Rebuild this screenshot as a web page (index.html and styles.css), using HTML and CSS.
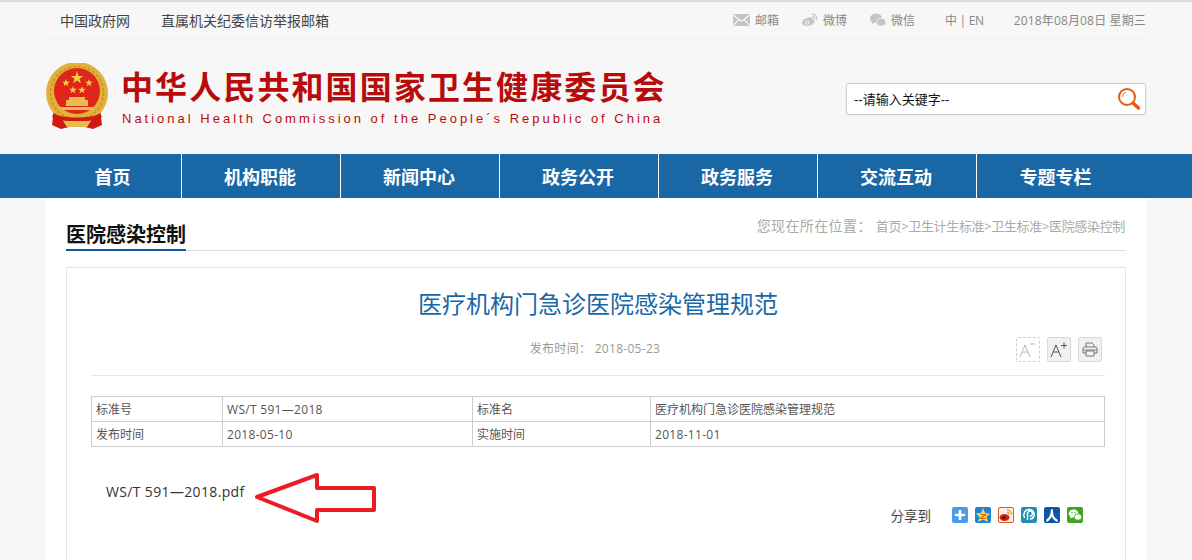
FILE: index.html
```html
<!DOCTYPE html>
<html lang="zh-CN">
<head>
    <meta charset="UTF-8">
    <meta name="viewport" content="width=device-width, initial-scale=1.0">
    <title>医疗机构门急诊医院感染管理规范</title>
    <link rel="stylesheet" href="styles.css">
</head>
<body>

    <!-- Top bar -->
    <div class="topbar">
        <div class="topbar-inner">
            <div class="top-links">
                <a href="#">中国政府网</a>
                <a href="#">直属机关纪委信访举报邮箱</a>
            </div>
            <div class="top-tools">
                <a href="#" class="tool tool-mail">
                    <svg width="17" height="12" viewBox="0 0 17 12"><path fill="#c4c4c4" d="M0 0h17L8.500 6.500zM0 1.500v9.500l5-5.500zM17 1.500v9.500l-5-5.500zM0.500 12l5.500-5.800 2.500 1.900 2.500-1.900 5.500 5.800z"/></svg>
                    邮箱
                </a>
                <a href="#" class="tool tool-weibo">
                    <svg width="16" height="14" viewBox="0 0 17 14"><path fill="#c4c4c4" d="M7 4.500c3.500-1 4.800.2 4.200 2 2.300.5 2.500 2 1.500 3.500-1.300 2.200-4.500 3.500-7.500 3.500C2.500 13.500 0 12.300 0 10c0-2 2.800-5 7-5.500z"/><circle cx="5.600" cy="9.800" r="2.300" fill="#f7f7f7"/><circle cx="5.600" cy="9.900" r="1.200" fill="#c4c4c4"/><path fill="none" stroke="#c4c4c4" stroke-width="1.400" d="M10.500 1.200c3-.7 6 2 5 5.500M11 3.500c1.500-.3 2.800 1 2.300 2.500"/></svg>
                    微博
                </a>
                <a href="#" class="tool tool-wechat">
                    <svg width="16" height="14" viewBox="0 0 17 14"><ellipse cx="6.500" cy="5.300" rx="6.500" ry="5.200" fill="#c4c4c4"/><path fill="#c4c4c4" d="M2.500 8.500l-.5 3 3-1.800z"/><ellipse cx="11.800" cy="9.300" rx="5.200" ry="4.300" fill="#c4c4c4" stroke="#f7f7f7" stroke-width="1"/></svg>
                    微信
                </a>
                <span class="lang">中 | EN</span>
                <span class="today">2018年08月08日 星期三</span>
            </div>
        </div>
    </div>

    <!-- Header with logo and search -->
    <div class="header">
        <div class="header-inner">
            <div class="logo">
                <svg class="emblem" width="64" height="70" viewBox="0 0 64 70">
                    <defs>
                        <polygon id="star" points="0,-5 1.200,-1.600 4.800,-1.600 1.900,.6 3,4 0,2 -3,4 -1.900,.6 -4.800,-1.600 -1.200,-1.600"/>
                    </defs>
                    <path fill="#d11a12" d="M9 46L7 62l9 4 12-3h8l12 3 9-4-2-16z"/>
                    <circle cx="32" cy="30" r="31" fill="#e2b13c"/>
                    <circle cx="32" cy="30" r="26.500" fill="none" stroke="#c98f1f" stroke-width="1.500" stroke-dasharray="3 2"/>
                    <circle cx="32" cy="28" r="23" fill="#e0261a"/>
                    <g fill="#f6d23f">
                        <use href="#star" transform="translate(32 15) scale(1.300)"/>
                        <use href="#star" transform="translate(21 20) scale(.8)"/>
                        <use href="#star" transform="translate(44 20) scale(.8)"/>
                        <use href="#star" transform="translate(28 27) scale(.8)"/>
                        <use href="#star" transform="translate(37 27) scale(.8)"/>
                    </g>
                    <path fill="#e9bb4c" d="M24 34h16v3h3v6H21v-6h3zM13 44h38l-3 3H16z"/>
                    <path fill="#d11a12" d="M9 50c6 6 40 6 46 0l2 4c-8 6-42 6-50 0z"/>
                    <path fill="#e9bb4c" d="M18 58h28l-4 6H22z"/>
                </svg>
                <div class="logo-text">
                    <div class="logo-cn">中华人民共和国国家卫生健康委员会</div>
                    <div class="logo-en">National Health Commission of the People´s Republic of China</div>
                </div>
            </div>
            <div class="search-box">
                <input type="text" class="search-input" value="--请输入关键字--">
                <svg width="24" height="24" viewBox="0 0 24 24"><circle cx="10" cy="10" r="8" fill="none" stroke="#e8590f" stroke-width="2"/><path fill="none" stroke="#f2a27a" stroke-width="1.500" d="M5.500 10c0-2 1.500-4 3.500-4.500"/><path stroke="#e8590f" stroke-width="3.500" stroke-linecap="round" d="M16.500 16.500l5 4.500"/></svg>
            </div>
        </div>
    </div>

    <!-- Main nav -->
    <div class="nav">
        <div class="nav-inner">
            <a href="#" class="nav-item nav-first">首页</a>
            <a href="#" class="nav-item">机构职能</a>
            <a href="#" class="nav-item">新闻中心</a>
            <a href="#" class="nav-item">政务公开</a>
            <a href="#" class="nav-item">政务服务</a>
            <a href="#" class="nav-item">交流互动</a>
            <a href="#" class="nav-item">专题专栏</a>
        </div>
    </div>

    <!-- Content -->
    <div class="main">
        <div class="section-head">
            <h2>医院感染控制</h2>
            <div class="crumbs">
                <span class="crumbs-label">您现在所在位置：</span>
                <span class="crumbs-path">首页&gt;卫生计生标准&gt;卫生标准&gt;医院感染控制</span>
            </div>
        </div>

        <div class="card">
            <h1>医疗机构门急诊医院感染管理规范</h1>
            <div class="meta">
                <span class="pub-date">发布时间： 2018-05-23</span>
                <div class="meta-btns">
                    <a href="#" class="btn btn-off">
                        <svg width="18" height="16" viewBox="0 0 18 16"><path fill="none" stroke="#bbb" d="M1 15L6 3l5 12M3 10h6M11 2h5"/></svg>
                    </a>
                    <a href="#" class="btn">
                        <svg width="18" height="16" viewBox="0 0 18 16"><path fill="none" stroke="#555" d="M1 15L6 3l5 12M3 10h6M11 3.500h6M14 .5v6"/></svg>
                    </a>
                    <a href="#" class="btn">
                        <svg width="16" height="15" viewBox="0 0 16 15"><path fill="none" stroke="#777" d="M4 5V1h6l2 2v2M2.500 5h11c1 0 1.500.5 1.500 1.500V11h-3M4 11H1V6.500C1 5.500 1.500 5 2.500 5M4 9h8v5H4zM1 8h14"/></svg>
                    </a>
                </div>
            </div>

            <table class="info">
                <tr>
                    <td class="c1">标准号</td>
                    <td class="c2 num">WS/T 591—2018</td>
                    <td class="c3">标准名</td>
                    <td>医疗机构门急诊医院感染管理规范</td>
                </tr>
                <tr>
                    <td>发布时间</td>
                    <td class="num">2018-05-10</td>
                    <td>实施时间</td>
                    <td class="num">2018-11-01</td>
                </tr>
            </table>

            <div class="attach">
                <a href="#" class="file">WS/T 591—2018.pdf</a>
                <!-- red arrow drawn over the page -->
                <svg class="arrow" width="126" height="52" viewBox="0 0 126 52"><polygon fill="#fff" stroke="#ed1c24" stroke-width="4" stroke-linejoin="round" points="3,25 63,3 63,16 120,16 120,38 63,38 63,49"/></svg>
            </div>

            <div class="share">
                <span class="share-label">分享到</span>
                <a href="#" class="share-icon">
                    <svg width="16" height="16" viewBox="0 0 16 16"><rect width="16" height="16" rx="2" fill="#4d9ae8"/><path stroke="#fff" stroke-width="2.500" d="M8 3v10M3 8h10"/></svg>
                </a>
                <a href="#" class="share-icon">
                    <svg width="16" height="16" viewBox="0 0 16 16"><rect width="16" height="16" rx="2" fill="#1a84d8"/><polygon fill="#ffd53c" points="8,1 10,6 15,6.500 11.500,10 13,15 8,12.500 3,15 4.500,10 1,6.500 6,6"/><path fill="none" stroke="#d8661a" stroke-width="1.200" d="M5.500 7.500h5l-5 4h5"/></svg>
                </a>
                <a href="#" class="share-icon">
                    <svg width="16" height="16" viewBox="0 0 16 16"><rect x=".5" y=".5" width="15" height="15" rx="1.500" fill="#fff1e4" stroke="#e2561e"/><ellipse cx="6.500" cy="10.500" rx="5" ry="3.500" fill="#d8231c"/><circle cx="6" cy="10.800" r="1.800" fill="#222"/><path fill="none" stroke="#f09a20" stroke-width="1.500" d="M9 3c2.500 0 4.500 2 4.500 4.500M9 5.500c1 0 2 1 2 2"/></svg>
                </a>
                <a href="#" class="share-icon">
                    <svg width="16" height="16" viewBox="0 0 16 16"><rect width="16" height="16" rx="2" fill="#1f8fb8"/><path fill="none" stroke="#fff" stroke-width="1.500" d="M6.500 13V6.500a2.500 2.500 0 1 1 2 2.500M3.500 11C1.500 7 4 2.500 8 2.500s6 3.500 5 6.500-3 3-4 3"/></svg>
                </a>
                <a href="#" class="share-icon">
                    <svg width="16" height="16" viewBox="0 0 16 16"><rect width="16" height="16" rx="2" fill="#0f56a8"/><path fill="none" stroke="#fff" stroke-width="2.200" d="M8 2.500c0 5-1.500 9-5.500 11.500M8 5c0 4 1.500 7 5.500 9"/></svg>
                </a>
                <a href="#" class="share-icon">
                    <svg width="16" height="16" viewBox="0 0 16 16"><rect width="16" height="16" rx="2" fill="#3fa51e"/><ellipse cx="6.500" cy="6.500" rx="4.800" ry="4" fill="#fff"/><path fill="#fff" d="M3.500 9l-.5 2.500L6 10z"/><ellipse cx="11" cy="10" rx="3.800" ry="3.200" fill="#fff" stroke="#3fa51e" stroke-width=".8"/><circle cx="5" cy="5.500" r=".7" fill="#3fa51e"/><circle cx="8" cy="5.500" r=".7" fill="#3fa51e"/></svg>
                </a>
            </div>
        </div>
    </div>

</body>
</html>
```

FILE: styles.css
```css
/* Page */
html,
body {
    height: 560px;
    overflow: hidden;
}

body {
    margin: 0;
    background-color: #f7f7f7;
    font-family: "Open Sans", "Noto Sans CJK SC", sans-serif;
    color: #333;
}

a {
    color: inherit;
    text-decoration: none;
}

/* Top bar */
.topbar {
    height: 37px;
    border-top: 2px solid #dcdcdc;
}

.topbar-inner {
    width: 1100px;
    height: 36px;
    margin: 0 auto;
    display: flex;
    justify-content: space-between;
    align-items: center;
    border-bottom: 1px solid #f0f0f0;
}

.top-links {
    display: flex;
    gap: 31px;
    padding-left: 14px;
    font-size: 14px;
    color: #444;
}

.top-tools {
    display: flex;
    align-items: center;
    font-size: 12px;
    color: #888;
}

.tool {
    display: flex;
    align-items: center;
    gap: 5px;
    margin-right: 23px;
}

.lang {
    margin-left: 7px;
    margin-right: 30px;
    letter-spacing: -0.3px;
}

.today {
    letter-spacing: 0.150px;
}

/* Header */
.header {
    height: 115px;
}

.header-inner {
    width: 1100px;
    height: 100%;
    margin: 0 auto;
    display: flex;
    justify-content: space-between;
    align-items: center;
}

.logo {
    display: flex;
    align-items: center;
    gap: 12px;
    margin-top: 2px;
}

.emblem {
    margin-left: -1px;
}

.logo-cn {
    font-size: 32px;
    font-weight: 700;
    line-height: 36px;
    letter-spacing: 2.100px;
    white-space: nowrap;
    color: #b80c0c;
}

.logo-en {
    margin-top: 6px;
    margin-left: 1px;
    font-family: "Liberation Sans", sans-serif;
    font-size: 13px;
    line-height: 16px;
    letter-spacing: 3px;
    white-space: nowrap;
    color: #b80c0c;
}

/* Search */
.search-box {
    width: 298px;
    height: 30px;
    margin-top: 4px;
    display: flex;
    align-items: center;
    background-color: white;
    border: 1px solid #ccc;
    border-radius: 3px;
    box-shadow: 0 0 2px rgba(0, 0, 0, 0.08);
}

.search-input {
    flex: 1;
    min-width: 0;
    height: 100%;
    padding: 0 0 0 7px;
    border: none;
    outline: none;
    background: none;
    font-family: "Liberation Sans", "Noto Sans CJK SC", sans-serif;
    font-size: 13px;
    color: #111;
}

.search-box svg {
    margin-right: 4px;
}

/* Main nav */
.nav {
    height: 44px;
    background-color: #1a67a6;
}

.nav-inner {
    width: 1100px;
    height: 100%;
    margin: 0 auto;
    display: flex;
}

.nav-item {
    box-sizing: border-box;
    width: 159px;
    padding-right: 2px;
    border-right: 1px solid white;
    font-size: 18px;
    font-weight: 700;
    line-height: 46px;
    text-align: center;
    color: white;
}

.nav-first {
    width: 136px;
}

.nav-item:last-child {
    border-right: none;
}

/* Content */
.main {
    width: 1060px;
    height: 362px;
    margin: 0 auto;
    padding: 0 20px;
    background-color: white;
}

.section-head {
    height: 52px;
    display: flex;
    justify-content: space-between;
    border-bottom: 1px solid #ddd;
}

h2 {
    height: 29px;
    margin: 22px 0 -1px;
    border-bottom: 2px solid #0f5aa0;
    font-size: 20px;
    font-weight: 700;
    line-height: 30px;
    color: #111;
}

.crumbs {
    display: flex;
    gap: 4px;
    padding-top: 17px;
    padding-right: 1px;
    line-height: 22px;
    color: #aaa;
}

.crumbs-label {
    font-size: 14px;
    letter-spacing: 0.400px;
}

.crumbs-path {
    font-size: 13px;
    letter-spacing: -0.340px;
}

/* Article card */
.card {
    position: relative;
    height: 340px;
    margin-top: 16px;
    padding: 0 20px 0 24px;
    border: 1px solid #e3e3e3;
    border-bottom: none;
}

h1 {
    margin: 0;
    padding-top: 18px;
    font-size: 24px;
    font-weight: 400;
    line-height: 36px;
    text-align: center;
    color: #1a67a6;
}

.meta {
    height: 39px;
    margin-top: 14px;
    padding-right: 6px;
    position: relative;
    display: flex;
    justify-content: center;
    border-bottom: 1px solid #e6e6e6;
}

.pub-date {
    font-size: 12px;
    line-height: 26px;
    letter-spacing: 0.300px;
    color: #999;
}

.meta-btns {
    position: absolute;
    top: 1px;
    right: 3px;
    display: flex;
    gap: 7px;
}

.btn {
    width: 22px;
    height: 23px;
    display: flex;
    align-items: center;
    justify-content: center;
    background-color: #f1f1f1;
    border: 1px solid #d8d8d8;
    border-radius: 2px;
}

.btn-off {
    background-color: white;
    border: 1px dashed #d0d0d0;
}

/* Standard info table */
.info {
    width: 1014px;
    margin-top: 20px;
    border-collapse: collapse;
    table-layout: fixed;
    font-size: 12px;
    color: #555;
}

.info td {
    height: 24px;
    padding: 0 4px;
    border: 1px solid #ccc;
}

.info .num {
    letter-spacing: 0.300px;
}

.c1 {
    width: 122px;
}

.c2 {
    width: 241px;
}

.c3 {
    width: 169px;
}

/* Attachment */
.attach {
    position: relative;
    height: 30px;
    margin-top: 30px;
    padding-left: 15px;
}

.file {
    font-size: 14px;
    line-height: 30px;
    letter-spacing: 0.350px;
    color: #333;
}

.arrow {
    position: absolute;
    left: 163px;
    top: -5px;
}

/* Share row */
.share {
    display: flex;
    align-items: center;
    justify-content: flex-end;
    gap: 7px;
    margin-top: -2px;
    padding-right: 22px;
}

.share-label {
    margin-right: 14px;
    font-size: 13.500px;
    color: #444;
}

.share-icon {
    display: flex;
    width: 16px;
    height: 16px;
}
```
